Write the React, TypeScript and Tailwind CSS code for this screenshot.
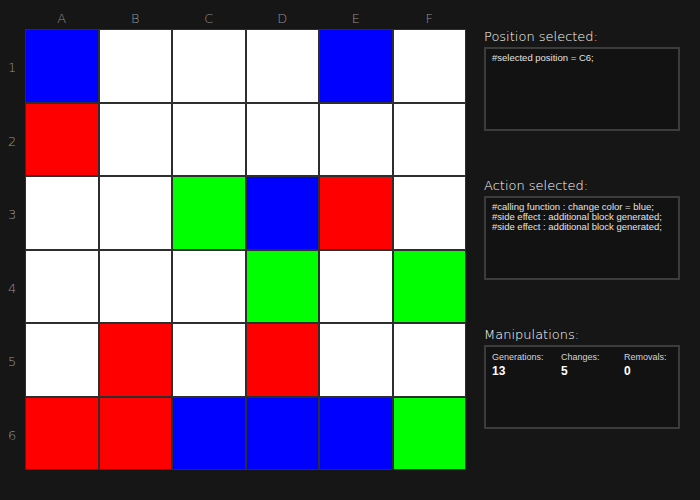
const cols = ['A', 'B', 'C', 'D', 'E', 'F'];

type Cell = 'B' | 'R' | 'G' | 'W';

const board: Cell[][] = [
    ['B', 'W', 'W', 'W', 'B', 'W'],
    ['R', 'W', 'W', 'W', 'W', 'W'],
    ['W', 'W', 'G', 'B', 'R', 'W'],
    ['W', 'W', 'W', 'G', 'W', 'G'],
    ['W', 'R', 'W', 'R', 'W', 'W'],
    ['R', 'R', 'B', 'B', 'B', 'G'],
];

const cellClass = (c: Cell) => {
    switch (c) {
        case 'B': return 'bg-[#0000ff]';
        case 'R': return 'bg-[#ff0000]';
        case 'G': return 'bg-[#00ff00]';
        default: return 'bg-white';
    }
};

const Panel = ({ title, children }: { title: string; children: React.ReactNode }) => (
    <div className="flex flex-col">
        <h2 className="h-[20px] text-[13px] leading-[20px] font-extralight text-white">{title}</h2>
        <div
            className="h-[84px] border-2 border-[#3c3c3c] bg-[#121212] px-[6px] pt-[4px] text-[9.5px] leading-[10px] text-[#e2e2e2] whitespace-nowrap"
            style={{ fontFamily: '"Liberation Sans", Arial, sans-serif' }}
        >
            {children}
        </div>
    </div>
);

export default function App() {
    return (
        <div
            className="w-[700px] h-[500px] bg-[#161616] flex"
            style={{ fontFamily: '"DejaVu Sans", sans-serif' }}
        >
            {/* Board */}
            <div className="flex flex-col">
                <div className="flex h-[29px] pl-[25px]">
                    {cols.map((c) => (
                        <div key={c} className="w-[73.5px] flex items-end justify-center pb-[1px] text-[13px] font-extralight text-[#949494]">
                            {c}
                        </div>
                    ))}
                </div>
                <div className="flex">
                    <div className="flex flex-col w-[25px]">
                        {board.map((_, i) => (
                            <div key={i} className="h-[73.5px] flex items-center pl-[8px] pt-[4px] text-[13px] font-extralight text-[#949494]">
                                {i + 1}
                            </div>
                        ))}
                    </div>
                    <div className="grid grid-cols-6 w-[441px] h-[441px]">
                        {board.flat().map((c, i) => (
                            <div key={i} className={`border border-[#2e2e2e] ${cellClass(c)}`} />
                        ))}
                    </div>
                </div>
            </div>

            {/* Side panels */}
            <div className="flex flex-col gap-[45px] pt-[27px] pl-[18px] w-[214px]">
                <Panel title="Position selected:">
                    <div>#selected position = C6;</div>
                </Panel>
                <Panel title="Action selected:">
                    <div>#calling function : change color = blue;</div>
                    <div>#side effect : additional block generated;</div>
                    <div>#side effect : additional block generated;</div>
                </Panel>
                <Panel title="Manipulations:">
                    <div className="flex pt-[1px]">
                        <div className="w-[69px]">
                            <div className="text-[9px] text-[#d4d4d4]">Generations:</div>
                            <div className="mt-[3px] text-[12px] leading-[12px] font-bold text-white">13</div>
                        </div>
                        <div className="w-[63px]">
                            <div className="text-[9px] text-[#d4d4d4]">Changes:</div>
                            <div className="mt-[3px] text-[12px] leading-[12px] font-bold text-white">5</div>
                        </div>
                        <div>
                            <div className="text-[9px] text-[#d4d4d4]">Removals:</div>
                            <div className="mt-[3px] text-[12px] leading-[12px] font-bold text-white">0</div>
                        </div>
                    </div>
                </Panel>
            </div>
        </div>
    );
}
